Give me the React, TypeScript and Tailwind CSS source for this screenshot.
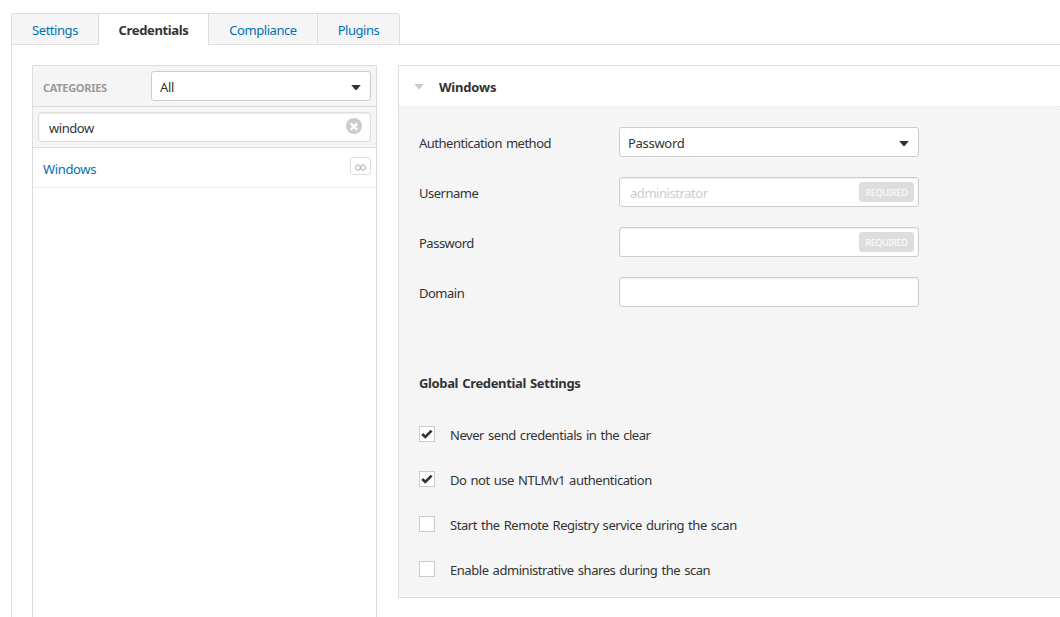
import React from "react";

const Caret = ({ className = "" }: { className?: string }) => (
  <svg className={className} width="10" height="5" viewBox="0 0 10 5">
    <path d="M0.2 0H9.8L6 4.4Q5 5.4 4 4.4Z" fill="currentColor" />
  </svg>
);

const tabs = [
  { label: "Settings", box: "w-[86px] rounded-tl-[3px] bg-[#f5f5f5] text-[#0071b9] border-b", text: "" },
  { label: "Credentials", box: "w-[110px] bg-white text-[#333] font-bold border-l pb-px", text: "tracking-[-0.36px]" },
  { label: "Compliance", box: "w-[109px] bg-[#f5f5f5] text-[#0071b9] border-l border-b", text: "" },
  { label: "Plugins", box: "w-[82px] rounded-tr-[3px] bg-[#f5f5f5] text-[#0071b9] border-l border-b", text: "" },
];

function Select({ value, className }: { value: string; className: string }) {
  return (
    <div className={`flex h-[30px] items-center justify-between rounded-[3px] border border-[#ccc] bg-white pl-2 pr-[9px] ${className}`}>
      <span className="relative top-[1px] tracking-[-0.3px]">{value}</span>
      <Caret className="relative top-[1px] text-[#333]" />
    </div>
  );
}

function Field({ label, children }: { label: string; children: React.ReactNode }) {
  return (
    <div className="flex h-[30px] items-center">
      <span className="relative top-[1px] w-[200px] tracking-[-0.5px]">{label}</span>
      {children}
    </div>
  );
}

function Input({ placeholder = "", required = false }: { placeholder?: string; required?: boolean }) {
  return (
    <div className="flex h-[30px] w-[300px] items-center justify-between rounded-[3px] border border-[#ccc] bg-white pl-[10px] pr-1 shadow-[inset_0_1px_2px_rgba(0,0,0,0.07)]">
      <span className="relative top-[1px] text-[#ccc]">{placeholder}</span>
      {required && (
        <span className="flex h-5 w-[55px] items-center justify-center rounded-[3px] bg-[#ddd] text-[9px] tracking-[-0.3px] text-white">
          <span className="relative top-[1px]">REQUIRED</span>
        </span>
      )}
    </div>
  );
}

const options = [
  { label: "Never send credentials in the clear", on: true },
  { label: "Do not use NTLMv1 authentication", on: true },
  { label: "Start the Remote Registry service during the scan", on: false },
  { label: "Enable administrative shares during the scan", on: false },
];

export default function App() {
  return (
    <div className="flex h-[617px] w-full flex-col overflow-hidden bg-white pl-[11px] pt-[13px] font-['Noto_Sans',sans-serif] text-[13px] leading-5 tracking-[-0.45px] text-[#333] [word-spacing:1.1px]">
      <div className="flex h-8 shrink-0">
        <div className="flex rounded-t-[3px] border-x border-t border-[#ddd]">
          {tabs.map((t) => (
            <div key={t.label} className={`flex items-center justify-center border-[#ddd] pt-[2px] ${t.box}`}>
              <span className={t.text}>{t.label}</span>
            </div>
          ))}
        </div>
        <div className="grow border-b border-[#ddd]" />
      </div>

      <div className="flex grow items-start border-l border-[#ddd] pl-5 pt-5">
        <div className="h-[560px] w-[345px] shrink-0 border border-[#ddd]">
          <div className="flex h-[41px] items-center justify-between border-b border-[#ddd] bg-[#f5f5f5] pl-[10px] pr-[5px]">
            <span className="relative top-[2px] text-[11px] font-bold tracking-[-0.3px] text-[#999]">CATEGORIES</span>
            <Select value="All" className="w-[220px]" />
          </div>
          <div className="flex h-[41px] items-center border-b border-[#ddd] bg-[#f5f5f5] px-[5px]">
            <div className="flex h-[30px] w-full items-center justify-between rounded-[3px] border border-[#ddd] bg-white pl-[10px] pr-2 shadow-[inset_0_1px_2px_rgba(0,0,0,0.07)]">
              <span className="relative top-[1px]">window</span>
              <svg className="relative top-[-1px]" width="16" height="16" viewBox="0 0 16 16">
                <circle cx="8" cy="8" r="8" fill="#ccc" />
                <path d="M4.8 5.4L11.2 11.8M11.2 5.4L4.8 11.8" stroke="#fff" strokeWidth="2.4" />
              </svg>
            </div>
          </div>
          <div className="flex h-10 items-center justify-between border-b border-dotted border-[#ddd] pl-[10px] pr-[5px]">
            <span className="relative top-[1px] tracking-[-0.35px] text-[#0071b9]">Windows</span>
            <span className="relative top-[-2px] flex h-[18px] w-[21px] items-center justify-center rounded-[3px] border border-[#ddd]">
              <svg className="relative top-[2px]" width="11" height="7" viewBox="0 0 11 7" fill="none" stroke="#aaa">
                <ellipse cx="3" cy="3.5" rx="2.4" ry="2.7" />
                <ellipse cx="8" cy="3.5" rx="2.4" ry="2.7" />
              </svg>
            </span>
          </div>
        </div>

        <div className="ml-[21px] h-[533px] grow border-y border-l border-[#ddd] bg-[#f5f5f5]">
          <div className="flex h-[41px] items-center border-b border-dotted border-[#ddd] bg-white pl-[15px]">
            <Caret className="text-[#ccc]" />
            <span className="relative top-[1px] ml-[15px] font-bold tracking-[-0.2px]">Windows</span>
          </div>
          <div className="pl-5 pt-5">
            <div className="flex flex-col gap-5">
              <Field label="Authentication method"><Select value="Password" className="w-[300px]" /></Field>
              <Field label="Username"><Input placeholder="administrator" required /></Field>
              <Field label="Password"><Input required /></Field>
              <Field label="Domain"><Input /></Field>
            </div>
            <h3 className="mt-[66px] h-5 font-bold tracking-[-0.36px]">Global Credential Settings</h3>
            <div className="mt-[33px] flex flex-col gap-[29px]">
              {options.map((o) => (
                <div key={o.label} className="flex h-4 items-center">
                  <span className="flex h-4 w-4 items-center justify-center border border-[#ccc] bg-white">
                    {o.on && (
                      <svg width="12" height="10" viewBox="0 0 12 10">
                        <path d="M1.2 5L4.3 7.9L10.6 1.6" stroke="#333" strokeWidth="2.7" fill="none" />
                      </svg>
                    )}
                  </span>
                  <span className="relative top-[1px] ml-[15px]">{o.label}</span>
                </div>
              ))}
            </div>
          </div>
        </div>
      </div>
    </div>
  );
}
